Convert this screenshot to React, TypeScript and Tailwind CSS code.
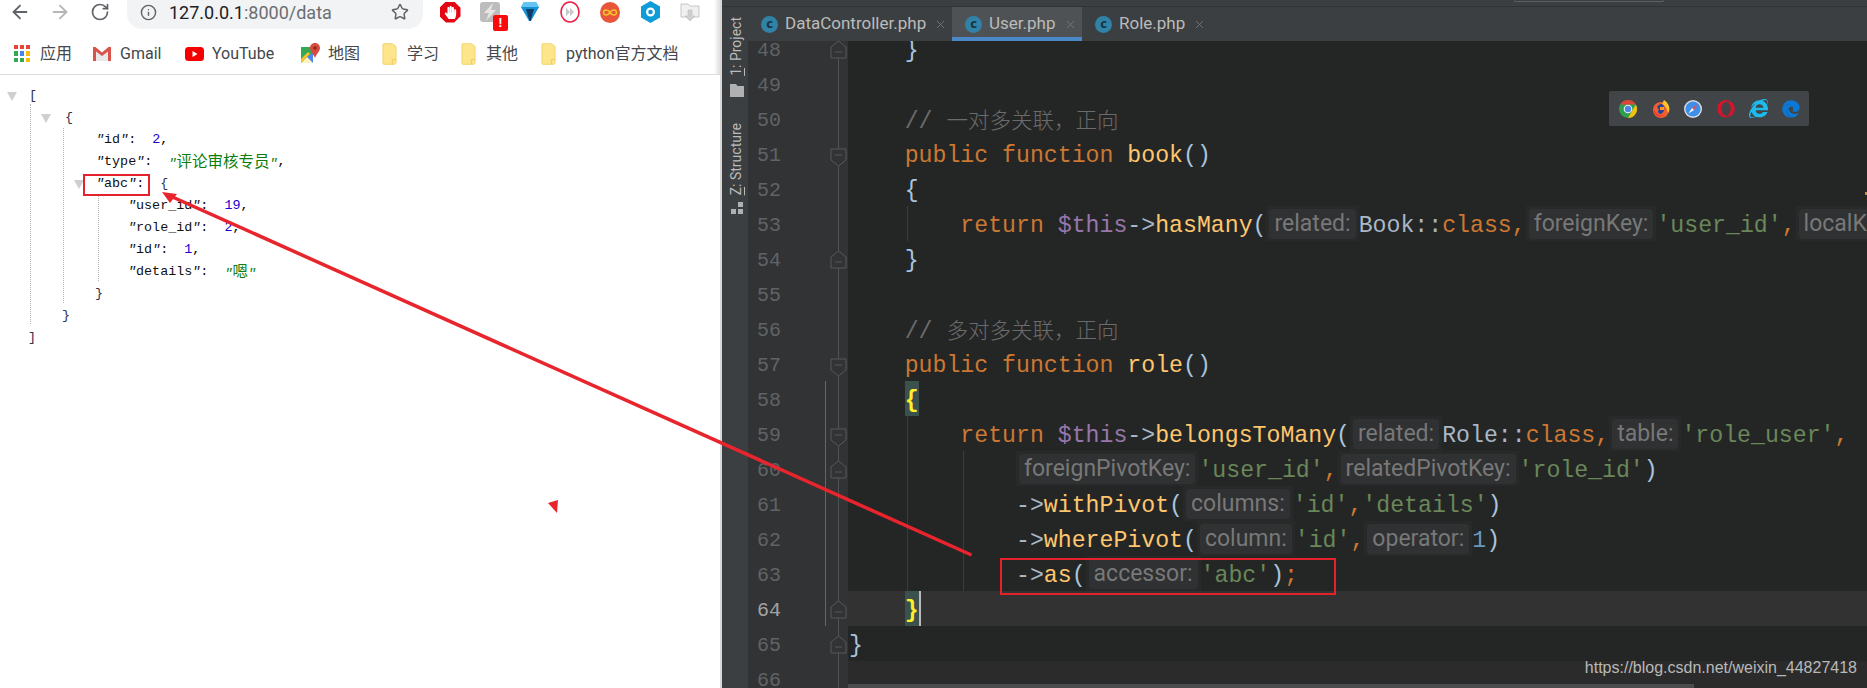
import React from 'react';
import { ArrowLeft, ArrowRight, Info, RotateCw, Star, X } from 'lucide-react';
import { FaEdge, FaHandPaper, FaInternetExplorer, FaOpera } from 'react-icons/fa';

const kw = 'text-[#cc7832]';
const fn = 'text-[#ffc66d]';
const str = 'text-[#6a8759]';
const pn = 'text-[#a9c4dd]';
const self = 'text-[#9876aa]';
const txt = 'text-[#a9b7c6]';

function S({ c, children }: { c: string; children: React.ReactNode }) {
  return <span className={c}>{children}</span>;
}

function Hint({ children }: { children: string }) {
  return (
    <span className="flex h-[35px] items-center bg-[#282a2a] px-[3px]">
      <span className="h-[30px] rounded-[4px] bg-[#2f3132] px-[5px] font-['Roboto'] text-[23px] leading-[30px] text-[#787878]">
        {children}
      </span>
    </span>
  );
}

function Brace({ children }: { children: string }) {
  return <span className="h-[35px] bg-[#3b514d] font-bold text-[#ffef28]">{children}</span>;
}

function Comment({ children }: { children: string }) {
  return (
    <span className="leading-[36px] text-[#6b6b6b]">
      {'    // '}
      <span className="font-['Noto_Sans_CJK_SC'] text-[21.5px] font-light">{children}</span>
    </span>
  );
}

function Fold({ type }: { type: 'start' | 'end' }) {
  return (
    <svg
      width="17"
      height="19"
      viewBox="0 0 17 19"
      className={type === 'start' ? 'relative ml-auto mr-[1px] mt-[12px] self-start' : 'relative ml-auto mr-[1px] mt-[9px] self-start'}
    >
      <path
        d={type === 'start' ? 'M1 1H16V12L8.5 18L1 12Z' : 'M1 18H16V7L8.5 1L1 7Z'}
        fill="#313335"
        stroke="#56595b"
      />
      <path d={type === 'start' ? 'M5 7H12' : 'M5 12H12'} stroke="#56595b" />
    </svg>
  );
}

type Line = {
  n: number;
  code?: React.ReactNode;
  fold?: 'start' | 'end';
  changed?: boolean;
  guides?: number;
  current?: boolean;
  eof?: boolean;
};

const lines: Line[] = [
  { n: 48, fold: 'end', code: <S c={pn}>{'    }'}</S> },
  { n: 49 },
  { n: 50, code: <Comment>一对多关联，正向</Comment> },
  { n: 51, fold: 'start', code: <><S c={kw}>{'    public function '}</S><S c={fn}>book</S><S c={pn}>()</S></> },
  { n: 52, code: <S c={pn}>{'    {'}</S> },
  {
    n: 53,
    guides: 1,
    code: (
      <>
        <S c={kw}>{'        return '}</S><S c={self}>$this</S><S c={txt}>-&gt;</S><S c={fn}>hasMany</S><S c={pn}>(</S>
        <Hint>related:</Hint>
        <S c={txt}>Book::</S><S c={kw}>class,</S>
        <Hint>foreignKey:</Hint>
        <S c={str}>'user_id'</S><S c={kw}>,</S>
        <Hint>localKey:</Hint>
      </>
    ),
  },
  { n: 54, fold: 'end', code: <S c={pn}>{'    }'}</S> },
  { n: 55 },
  { n: 56, code: <Comment>多对多关联，正向</Comment> },
  { n: 57, fold: 'start', code: <><S c={kw}>{'    public function '}</S><S c={fn}>role</S><S c={pn}>()</S></> },
  { n: 58, changed: true, code: <><span>{'    '}</span><Brace>{'{'}</Brace></> },
  {
    n: 59,
    fold: 'start',
    changed: true,
    guides: 1,
    code: (
      <>
        <S c={kw}>{'        return '}</S><S c={self}>$this</S><S c={txt}>-&gt;</S><S c={fn}>belongsToMany</S><S c={pn}>(</S>
        <Hint>related:</Hint>
        <S c={txt}>Role::</S><S c={kw}>class,</S>
        <Hint>table:</Hint>
        <S c={str}>'role_user'</S><S c={kw}>,</S>
      </>
    ),
  },
  {
    n: 60,
    fold: 'end',
    changed: true,
    guides: 2,
    code: (
      <>
        <span>{'            '}</span>
        <Hint>foreignPivotKey:</Hint>
        <S c={str}>'user_id'</S><S c={kw}>,</S>
        <Hint>relatedPivotKey:</Hint>
        <S c={str}>'role_id'</S><S c={pn}>)</S>
      </>
    ),
  },
  {
    n: 61,
    changed: true,
    guides: 2,
    code: (
      <>
        <S c={txt}>{'            ->'}</S><S c={fn}>withPivot</S><S c={pn}>(</S>
        <Hint>columns:</Hint>
        <S c={str}>'id'</S><S c={kw}>,</S><S c={str}>'details'</S><S c={pn}>)</S>
      </>
    ),
  },
  {
    n: 62,
    changed: true,
    guides: 2,
    code: (
      <>
        <S c={txt}>{'            ->'}</S><S c={fn}>wherePivot</S><S c={pn}>(</S>
        <Hint>column:</Hint>
        <S c={str}>'id'</S><S c={kw}>,</S>
        <Hint>operator:</Hint>
        <S c="text-[#6897bb]">1</S><S c={pn}>)</S>
      </>
    ),
  },
  {
    n: 63,
    changed: true,
    guides: 2,
    code: (
      <>
        <S c={txt}>{'            ->'}</S><S c={fn}>as</S><S c={pn}>(</S>
        <Hint>accessor:</Hint>
        <S c={str}>'abc'</S><S c={pn}>)</S><S c={kw}>;</S>
      </>
    ),
  },
  {
    n: 64,
    fold: 'end',
    changed: true,
    current: true,
    code: <><span>{'    '}</span><Brace>{'}'}</Brace><span className="h-[35px] w-[2px] bg-[#bbbbbb]" /></>,
  },
  { n: 65, fold: 'end', code: <S c={pn}>{'}'}</S> },
  { n: 66, eof: true },
];

function CodeRow({ line }: { line: Line }) {
  return (
    <div className="flex h-[35px] shrink-0">
      <div className="relative flex w-[100px] shrink-0 bg-[#313335] pl-[9px]">
        <span className={line.current ? 'text-[20px] leading-[40px] text-[#a4a3a3]' : 'text-[20px] leading-[40px] text-[#606366]'}>
          {line.n}
        </span>
        {line.changed && <span className="absolute inset-y-0 left-[77px] w-[1px] bg-[#56705f]" />}
        <span className="absolute inset-y-0 left-[90px] w-[1px] bg-[#505355]" />
        {line.fold && <Fold type={line.fold} />}
      </div>
      <div
        className={
          line.current
            ? 'relative flex min-w-0 flex-1 items-start overflow-hidden whitespace-pre bg-[#323232] pl-[1px] leading-[41px]'
            : line.eof
              ? 'relative flex min-w-0 flex-1 items-start overflow-hidden whitespace-pre bg-[#2b2b2b] pl-[1px] leading-[41px]'
              : 'relative flex min-w-0 flex-1 items-start overflow-hidden whitespace-pre bg-[#242626] pl-[1px] leading-[41px]'
        }
      >
        {line.code}
        {line.guides && <span className="absolute inset-y-0 left-[59px] w-[1px] bg-[#3a3c3c]" />}
        {line.guides === 2 && <span className="absolute inset-y-0 left-[115px] w-[1px] bg-[#3a3c3c]" />}
        {line.n === 52 && <span className="absolute right-0 top-[21px] h-[3px] w-[2px] bg-[#c9922f]" />}
      </div>
    </div>
  );
}

function Tab({ name, active, w }: { name: string; active?: boolean; w: string }) {
  return (
    <div className={`flex h-[34px] items-center ${w} ${active ? 'border-b-[4px] border-[#4a88c7] bg-[#4e5254] pt-[4px]' : ''} shrink-0 pl-[13px]`}>
      <span className="flex h-[17px] w-[17px] items-center justify-center rounded-full bg-[#3082a6] pb-[1px] text-[13px] font-bold leading-none text-[#17313d]">
        c
      </span>
      <span className="ml-[7px] font-['Roboto'] text-[17px] text-[#bbbbbb]">{name}</span>
      <X size={13} strokeWidth={1.5} className="ml-[8px] text-[#7a7d7f]" />
    </div>
  );
}

function Editor() {
  return (
    <div className="flex min-w-0 flex-1 flex-col bg-[#3c3f41]">
      <div className="h-[7px] shrink-0 border-b border-[#323232]">
        <div className="ml-[792px] h-[2px] w-[150px] rounded-b-[2px] border-x border-b border-[#5c5f61]" />
      </div>
      <div className="flex min-h-0 flex-1">
        <div className="flex w-[26px] shrink-0 flex-col items-center pl-[3px] pt-[10px] font-['Roboto'] text-[14px] text-[#bbbbbb]">
          <span className="rotate-180 [writing-mode:vertical-rl]"><u>1</u>: Project</span>
          <svg width="14" height="13" viewBox="0 0 14 13" className="mt-[8px]">
            <path d="M0 0H6L7.5 2H14V13H0Z" fill="#afb1b3" />
          </svg>
          <span className="mt-[26px] rotate-180 [writing-mode:vertical-rl]"><u>Z</u>: Structure</span>
          <svg width="12" height="12" viewBox="0 0 12 12" className="mt-[7px]">
            <path d="M7 0H12V5H7ZM0 7H5V12H0ZM7 7H12V12H7Z" fill="#afb1b3" />
          </svg>
        </div>
        <div className="relative flex min-w-0 flex-1 flex-col overflow-hidden">
          <div className="relative z-10 flex h-[34px] shrink-0 bg-[#3c3f41]">
            <Tab name="DataController.php" w="w-[204px]" />
            <Tab name="User.php" active w="w-[130px]" />
            <Tab name="Role.php" w="w-[130px]" />
          </div>
          <div className="-mt-[10px] flex min-h-0 flex-1 flex-col font-['Liberation_Mono'] text-[23.2px]">
            {lines.map((line) => (
              <CodeRow key={line.n} line={line} />
            ))}
          </div>
          <div className="absolute bottom-0 left-[100px] h-[4px] w-[846px] bg-[#4a4c4d]" />
          <div className="absolute bottom-[8px] right-[10px] font-['Liberation_Sans'] text-[16px] leading-[24px] text-[#b9b9b9]">
            https://blog.csdn.net/weixin_44827418
          </div>
        </div>
      </div>
    </div>
  );
}

function Chrome() {
  return (
    <svg width="18" height="18" viewBox="0 0 18 18">
      <circle cx="9" cy="9" r="9" fill="#2f9e4f" />
      <path d="M1.2 4.5A9 9 0 0 1 16.8 4.5H9Z" fill="#db4437" />
      <path d="M16.8 4.5A9 9 0 0 1 9 18L13 11Z" fill="#f4c20d" />
      <circle cx="9" cy="9" r="4.3" fill="#f1f1f1" />
      <circle cx="9" cy="9" r="3.2" fill="#4a86e8" />
    </svg>
  );
}

function Firefox() {
  return (
    <svg width="18" height="18" viewBox="0 0 18 18">
      <circle cx="9" cy="10" r="8" fill="#f2602a" />
      <path d="M12 0C17 3 19 9 16 13C15 9 13 5 10 4Z" fill="#fdc52c" />
      <path d="M5 7C7 4 10 3 11 5C13 7 13 12 9 14C6 14 5 11 7 10Z" fill="#23429e" />
      <path d="M8 7H12V10H8Z" fill="#f79a25" />
      <path d="M2 9C3 14 8 17 13 15C9 18 2 16 2 9Z" fill="#e31b4c" />
    </svg>
  );
}

function Safari() {
  return (
    <svg width="18" height="18" viewBox="0 0 18 18">
      <circle cx="9" cy="9" r="9" fill="#d9dde2" />
      <circle cx="9" cy="9" r="7.6" fill="#3f8ee8" />
      <path d="M13.5 4.5L10 10L8 8Z" fill="#ef4b4b" />
      <path d="M4.5 13.5L8 8L10 10Z" fill="#f5f5f5" />
    </svg>
  );
}

const browsers = [
  <Chrome key="chrome" />,
  <Firefox key="firefox" />,
  <Safari key="safari" />,
  <FaOpera key="opera" size={18} color="#d5152c" />,
  <FaInternetExplorer key="ie" size={19} color="#1ebbee" />,
  <FaEdge key="edge" size={18} color="#0a78d7" />,
];

function Extensions() {
  return (
    <div className="ml-[7px] flex">
      <div className="flex h-[24px] w-[40px] items-center justify-center">
        <span className="flex h-[21px] w-[21px] items-center justify-center bg-[#e30613] [clip-path:polygon(30%_0,70%_0,100%_30%,100%_70%,70%_100%,30%_100%,0_70%,0_30%)]">
          <FaHandPaper size={13} color="#fff" />
        </span>
      </div>
      <div className="flex h-[24px] w-[40px] items-center justify-center">
        <span className="relative h-[20px] w-[20px] rounded-[3px] bg-[#bcbcbc]">
          <svg width="20" height="20" viewBox="0 0 20 20">
            <path d="M13 1L4 11H9L6 19L16 8H11Z" fill="#e6e6e6" />
          </svg>
          <span className="absolute left-[13px] top-[13px] flex h-[16px] w-[15px] items-center justify-center rounded-[2px] bg-[#fb0a0a] font-['Liberation_Sans'] text-[13px] font-bold text-white">
            !
          </span>
        </span>
      </div>
      <div className="flex h-[24px] w-[40px] items-center justify-center">
        <svg width="18" height="22" viewBox="0 0 18 22">
          <path d="M3 1H15L18 6L10 20H8L0 6Z" fill="#1590d4" />
          <path d="M3 1H15L18 6H0Z" fill="#63c6f2" />
          <path d="M5 8H13L9.5 20H8.5Z" fill="#0b3d66" />
        </svg>
      </div>
      <div className="flex h-[24px] w-[40px] items-center justify-center">
        <svg width="20" height="22" viewBox="0 0 20 22">
          <ellipse cx="10" cy="11" rx="9" ry="10" fill="#fff" stroke="#e8204a" strokeWidth="1.6" />
          <path d="M6 6.5L10 11L6 15.5ZM10 6.5L14 11L10 15.5Z" fill="#c8c8c8" />
        </svg>
      </div>
      <div className="flex h-[24px] w-[40px] items-center justify-center">
        <svg width="20" height="21" viewBox="0 0 20 21">
          <ellipse cx="10" cy="10.5" rx="10" ry="10.5" fill="#e8553a" />
          <path d="M10 10.5C8 7 3.5 7.5 3.5 10.5S8 14 10 10.5C12 7 16.5 7.5 16.5 10.5S12 14 10 10.5Z" fill="none" stroke="#f6c12c" strokeWidth="1.6" />
        </svg>
      </div>
      <div className="flex h-[24px] w-[40px] items-center justify-center">
        <svg width="19" height="22" viewBox="0 0 19 22">
          <path d="M9.5 0L19 5.5V16.5L9.5 22L0 16.5V5.5Z" fill="#0f9ad8" />
          <circle cx="9.5" cy="11" r="3.4" fill="none" stroke="#fff" strokeWidth="2.2" />
        </svg>
      </div>
      <div className="flex h-[24px] w-[40px] items-center justify-center">
        <svg width="20" height="22" viewBox="0 0 20 22">
          <path d="M1 3H8L10 5H19V16H1Z" fill="#f0f0f0" stroke="#c6c6c6" />
          <path d="M8 9H12V15H15L10 20L5 15H8Z" fill="#d0d0d0" stroke="#bdbdbd" strokeWidth="0.6" />
        </svg>
      </div>
    </div>
  );
}

function Folder() {
  return (
    <svg width="15" height="24" viewBox="0 0 16 24">
      <path d="M2 1H11L15 4V21C15 22 14 23 13 23H2C1.4 23 1 22.6 1 22V2C1 1.4 1.4 1 2 1Z" fill="#fde58c" stroke="#f3d26a" />
      <path d="M11 23V18H15" fill="none" stroke="#f0c95c" />
    </svg>
  );
}

function Apps() {
  const colors = ['bg-[#ea4335]', 'bg-[#ea4335]', 'bg-[#ea4335]', 'bg-[#34a853]', 'bg-[#4285f4]', 'bg-[#fbbc05]', 'bg-[#34a853]', 'bg-[#34a853]', 'bg-[#fbbc05]'];
  return (
    <div className="grid h-[17px] w-[16px] grid-cols-3 gap-[2px]">
      {colors.map((c, i) => (
        <span key={i} className={c} />
      ))}
    </div>
  );
}

function GmailIcon() {
  return (
    <svg width="18" height="16" viewBox="0 0 18 16">
      <path d="M1 2V15H17V2L9 8Z" fill="#e8e8e8" />
      <path d="M0 1H2.5L9 6.5L15.5 1H18V15H15V5.5L9 10L3 5.5V15H0Z" fill="#d9534a" />
    </svg>
  );
}

function YouTubeIcon() {
  return (
    <svg width="19" height="14" viewBox="0 0 19 14">
      <rect width="19" height="14" rx="3.5" fill="#f40000" />
      <path d="M7.5 4L12.5 7L7.5 10Z" fill="#fff" />
    </svg>
  );
}

function MapsIcon() {
  return (
    <svg width="19" height="22" viewBox="0 0 19 22">
      <path d="M0 4H12V20H0Z" fill="#35a853" />
      <path d="M0 20L12 9V20Z" fill="#4a88ee" />
      <path d="M0 20L6 14L12 20Z" fill="#fff3c4" />
      <path d="M0 16L7 9L9 11L0 20Z" fill="#fbc02d" />
      <path d="M14 0C17 0 19 2.2 19 5C19 8 15.5 11 14 15C12.5 11 9 8 9 5C9 2.2 11 0 14 0Z" fill="#d94b3e" />
      <circle cx="14" cy="5" r="1.8" fill="#8a2a22" />
    </svg>
  );
}

const bookmarks: { icon: React.ReactNode; label: string; w: string }[] = [
  { icon: <Apps />, label: '应用', w: 'w-[80px]' },
  { icon: <GmailIcon />, label: 'Gmail', w: 'w-[92px]' },
  { icon: <YouTubeIcon />, label: 'YouTube', w: 'w-[116px]' },
  { icon: <MapsIcon />, label: '地图', w: 'w-[79px]' },
  { icon: <Folder />, label: '学习', w: 'w-[79px]' },
  { icon: <Folder />, label: '其他', w: 'w-[80px]' },
  { icon: <Folder />, label: 'python官方文档', w: 'w-[150px]' },
];

function Q() {
  return <span className="italic">"</span>;
}

function Key({ name }: { name: string }) {
  return (
    <span className="text-[#111111]">
      <Q />{name}<Q />:{'  '}
    </span>
  );
}

function Tri({ className }: { className: string }) {
  return (
    <svg width="10" height="9" viewBox="0 0 10 9" className={className}>
      <path d="M0 0H10L5 9Z" fill="#cfcfcf" />
    </svg>
  );
}

const num = 'text-[#2200cc]';
const jstr = 'text-[#0a7d0a]';
const brk = 'text-[#30304a]';

function JsonView() {
  return (
    <div className="relative whitespace-pre pt-[10px] font-['Liberation_Mono','Noto_Sans_CJK_SC',monospace] text-[13.4px]">
      <span className="absolute left-[30px] top-[29px] h-[220px] border-l border-dotted border-[#b5b5b5]" />
      <span className="absolute left-[63px] top-[53px] h-[175px] border-l border-dotted border-[#b5b5b5]" />
      <span className="absolute left-[98px] top-[119px] h-[87px] border-l border-dotted border-[#b5b5b5]" />
      <div className="flex h-[22px] items-center"><Tri className="ml-[7px] mr-[12px]" /><S c={brk}>[</S></div>
      <div className="flex h-[22px] items-center"><Tri className="ml-[41px] mr-[14px]" /><S c={brk}>{'{'}</S></div>
      <div className="flex h-[22px] items-center pl-[96px]"><Key name="id" /><S c={num}>2</S>,</div>
      <div className="flex h-[22px] items-center pl-[96px]">
        <Key name="type" />
        <S c={jstr}><Q /><span className="font-['Noto_Sans_CJK_SC'] text-[15.5px]">评论审核专员</span><Q /></S>,
      </div>
      <div className="flex h-[22px] items-center"><Tri className="ml-[74px] mr-[12px]" /><Key name="abc" /><S c={brk}>{'{'}</S></div>
      <div className="flex h-[22px] items-center pl-[128px]"><Key name="user_id" /><S c={num}>19</S>,</div>
      <div className="flex h-[22px] items-center pl-[128px]"><Key name="role_id" /><S c={num}>2</S>,</div>
      <div className="flex h-[22px] items-center pl-[128px]"><Key name="id" /><S c={num}>1</S>,</div>
      <div className="flex h-[22px] items-center pl-[128px]">
        <Key name="details" />
        <S c={jstr}><Q /><span className="font-['Noto_Sans_CJK_SC'] text-[15.5px]">嗯</span><Q /></S>
      </div>
      <div className="flex h-[22px] items-center pl-[95px]"><S c={brk}>{'}'}</S></div>
      <div className="flex h-[22px] items-center pl-[62px]"><S c={brk}>{'}'}</S></div>
      <div className="flex h-[22px] items-center pl-[28px]"><S c={brk}>]</S></div>
    </div>
  );
}

function Browser() {
  return (
    <div className="relative w-[722px] shrink-0 border-r-2 border-[#d8d8d8] bg-white">
      <div className="flex h-[36px] items-start">
        <div className="flex h-[24px] w-[40px] items-center justify-center"><ArrowLeft size={22} color="#5f6368" /></div>
        <div className="flex h-[24px] w-[40px] items-center justify-center"><ArrowRight size={22} color="#b4b6b9" /></div>
        <div className="flex h-[24px] w-[40px] items-center justify-center"><RotateCw size={20} color="#5f6368" /></div>
        <div className="ml-[7px] flex h-[29px] w-[296px] items-center rounded-b-[15px] bg-[#f1f3f4] pb-[5px] pl-[13px]">
          <Info size={17} color="#5f6368" />
          <span className="ml-[12px] font-['Roboto'] text-[18px] text-[#202124]">
            127.0.0.1<span className="text-[#6b6e72]">:8000/data</span>
          </span>
          <Star size={18} color="#5f6368" className="ml-auto mr-[14px]" />
        </div>
        <Extensions />
      </div>
      <div className="flex h-[39px] items-center border-b border-[#dcdcdc] pb-[3px] pl-[12px] font-['Roboto','Noto_Sans_CJK_SC',sans-serif] text-[16px] text-[#44474b]">
        {bookmarks.map((b) => (
          <div key={b.label + b.w} className={`flex shrink-0 items-center ${b.w}`}>
            <span className="flex w-[20px] justify-center">{b.icon}</span>
            <span className="ml-[8px]">{b.label}</span>
          </div>
        ))}
      </div>
      <JsonView />
      <div className="absolute right-0 top-0 h-[74px] w-[6px] bg-gradient-to-r from-white to-[#dedede]" />
    </div>
  );
}

export default function App() {
  return (
    <div className="relative flex h-[688px] w-[1867px] overflow-hidden">
      <Browser />
      <Editor />
      <div className="absolute left-[1609px] top-[91px] flex h-[35px] w-[200px] items-center rounded-[2px] bg-[#414548] pl-[3px]">
        {browsers.map((b, i) => (
          <span key={i} className="flex w-[32.6px] justify-center">{b}</span>
        ))}
      </div>
      <div className="absolute left-[83px] top-[174px] h-[22px] w-[67px] border-2 border-[#e5222b]" />
      <div className="absolute left-[1000px] top-[558px] h-[37px] w-[336px] border-2 border-[#e5222b]" />
      <svg width="1867" height="688" className="pointer-events-none absolute left-0 top-0">
        <path d="M168 195L971.5 555" stroke="#e8242c" strokeWidth="3.5" />
        <path d="M162 192L177 194L170 203Z" fill="#e8242c" />
        <path d="M548 503L558 500L557 513Z" fill="#e8242c" />
      </svg>
    </div>
  );
}
